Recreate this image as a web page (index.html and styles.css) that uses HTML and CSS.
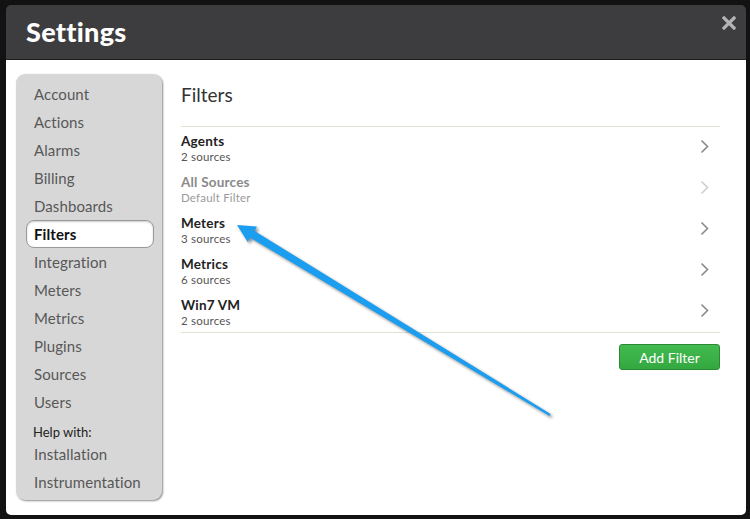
FILE: index.html
```html
<!DOCTYPE html>
<html>
<head>
<meta charset="utf-8">
<link rel="stylesheet" href="styles.css">
</head>
<body>
<div class="modal">
  <div class="modal-header">
    <h1 class="modal-title">Settings</h1>
    <svg class="close" width="14" height="14" viewBox="0 0 14 14"><path d="M2 2 L12 12 M12 2 L2 12" stroke="#b4b4b4" stroke-width="3.2" stroke-linecap="square"/></svg>
  </div>
  <div class="modal-body">
    <nav class="sidebar">
      <a class="nav-item">Account</a>
      <a class="nav-item">Actions</a>
      <a class="nav-item">Alarms</a>
      <a class="nav-item">Billing</a>
      <a class="nav-item">Dashboards</a>
      <a class="nav-item active">Filters</a>
      <a class="nav-item">Integration</a>
      <a class="nav-item">Meters</a>
      <a class="nav-item">Metrics</a>
      <a class="nav-item">Plugins</a>
      <a class="nav-item">Sources</a>
      <a class="nav-item">Users</a>
      <div class="nav-label">Help with:</div>
      <a class="nav-item">Installation</a>
      <a class="nav-item">Instrumentation</a>
    </nav>
    <main class="content">
      <h2 class="content-title">Filters</h2>
      <ul class="filter-list">
        <li class="filter-row">
          <div><div class="filter-name">Agents</div><div class="filter-sub">2 sources</div></div>
          <svg class="chev" width="9" height="15" viewBox="0 0 9 15"><path d="M1.5 1.5 L7.5 7.5 L1.5 13.5" fill="none" stroke="#8a8a8a" stroke-width="1.6"/></svg>
        </li>
        <li class="filter-row muted">
          <div><div class="filter-name">All Sources</div><div class="filter-sub">Default Filter</div></div>
          <svg class="chev" width="9" height="15" viewBox="0 0 9 15"><path d="M1.5 1.5 L7.5 7.5 L1.5 13.5" fill="none" stroke="#cfcfcf" stroke-width="1.6"/></svg>
        </li>
        <li class="filter-row">
          <div><div class="filter-name">Meters</div><div class="filter-sub">3 sources</div></div>
          <svg class="chev" width="9" height="15" viewBox="0 0 9 15"><path d="M1.5 1.5 L7.5 7.5 L1.5 13.5" fill="none" stroke="#8a8a8a" stroke-width="1.6"/></svg>
        </li>
        <li class="filter-row">
          <div><div class="filter-name">Metrics</div><div class="filter-sub">6 sources</div></div>
          <svg class="chev" width="9" height="15" viewBox="0 0 9 15"><path d="M1.5 1.5 L7.5 7.5 L1.5 13.5" fill="none" stroke="#8a8a8a" stroke-width="1.6"/></svg>
        </li>
        <li class="filter-row">
          <div><div class="filter-name">Win7 VM</div><div class="filter-sub">2 sources</div></div>
          <svg class="chev" width="9" height="15" viewBox="0 0 9 15"><path d="M1.5 1.5 L7.5 7.5 L1.5 13.5" fill="none" stroke="#8a8a8a" stroke-width="1.6"/></svg>
        </li>
      </ul>
      <div class="actions"><button class="btn-add">Add Filter</button></div>
    </main>
  </div>
</div>
<svg class="annotation" width="750" height="519" viewBox="0 0 750 519">
  <polygon points="237,225 257,226.6 254.5,230.9 550.6,414 549.4,416 250.3,237.7 247.7,242" fill="#1b9ef0"/>
</svg>
</body>
</html>
```
FILE: styles.css
```css
html, body {
  margin: 0;
  padding: 0;
}
body {
  background: #121212;
  width: 750px;
  height: 519px;
  overflow: hidden;
  position: relative;
  font-family: "Lato", "Open Sans", sans-serif;
}
.modal {
  margin: 5px 0 0 6px;
  width: 740px;
  border-radius: 5px;
  overflow: hidden;
}
.modal-header {
  height: 54px;
  background: #3d3d3f;
  display: flex;
  align-items: center;
  justify-content: space-between;
  padding: 0 10px 0 20px;
  box-sizing: border-box;
}
.modal-title {
  margin: 0 0 2px 0;
  color: #fff;
  font-family: "Lato", sans-serif;
  font-weight: 900;
  font-size: 27px;
  letter-spacing: 0.3px;
  line-height: 1;
}
.close {
  align-self: flex-start;
  margin-top: 11px;
}
.modal-body {
  background: #fff;
  height: 456px;
  display: flex;
  padding: 14px 26px 15px 10px;
  box-sizing: border-box;
  border-top: 1px solid #1c1c1c;
}
.sidebar {
  width: 146px;
  flex: none;
  background: #d7d7d7;
  border-radius: 9px;
  box-shadow: 1px 1px 2px rgba(0,0,0,0.45);
  padding: 6px 8px 3px 10px;
  box-sizing: border-box;
  display: flex;
  flex-direction: column;
}
.nav-item {
  display: block;
  height: 28px;
  line-height: 28px;
  padding-left: 8px;
  font-size: 15px;
  color: #585858;
  letter-spacing: 0.1px;
  border-radius: 8px;
  box-sizing: border-box;
}
.nav-item.active {
  background: #fff;
  color: #111;
  font-weight: 700;
  border: 1px solid #9a9a9a;
  line-height: 26px;
  padding-left: 7px;
  box-shadow: inset 0 1px 2px rgba(0,0,0,0.2);
}
.nav-label {
  margin-top: 8px;
  height: 16px;
  line-height: 16px;
  padding-left: 7px;
  font-size: 13px;
  color: #222;
}
.content {
  flex: 1;
  margin-left: 19px;
  display: flex;
  flex-direction: column;
}
.content-title {
  margin: 9px 0 0 0;
  font-weight: 400;
  font-size: 19px;
  line-height: 24px;
  color: #333;
  height: 44px;
  border-bottom: 1px solid #e2e2d4;
  box-sizing: border-box;
}
.filter-list {
  list-style: none;
  margin: 0;
  padding: 0;
  border-bottom: 1px solid #e2e2d4;
}
.filter-row {
  height: 41px;
  box-sizing: border-box;
  padding: 6px 11px 0 0;
  display: flex;
  justify-content: space-between;
  align-items: flex-start;
}
.filter-name {
  font-size: 13.5px;
  font-weight: 700;
  color: #222;
  line-height: 16px;
  letter-spacing: 0.2px;
}
.filter-sub {
  font-size: 11.5px;
  color: #555;
  line-height: 15px;
  letter-spacing: 0.2px;
}
.muted .filter-name { color: #8a8a8a; }
.muted .filter-sub { color: #9a9a9a; }
.chev {
  margin-top: 6px;
}
.actions {
  display: flex;
  justify-content: flex-end;
  margin-top: 11px;
}
.btn-add {
  width: 101px;
  height: 26px;
  background: linear-gradient(#43bb4f, #33a840);
  border: 1px solid #2a8a33;
  border-radius: 3px;
  color: #fff;
  font-family: "Lato", sans-serif;
  font-size: 14px;
  padding: 0;
}
.annotation {
  position: absolute;
  left: 0;
  top: 0;
  filter: drop-shadow(2px 2px 1.5px rgba(0,0,0,0.45));
}
```
